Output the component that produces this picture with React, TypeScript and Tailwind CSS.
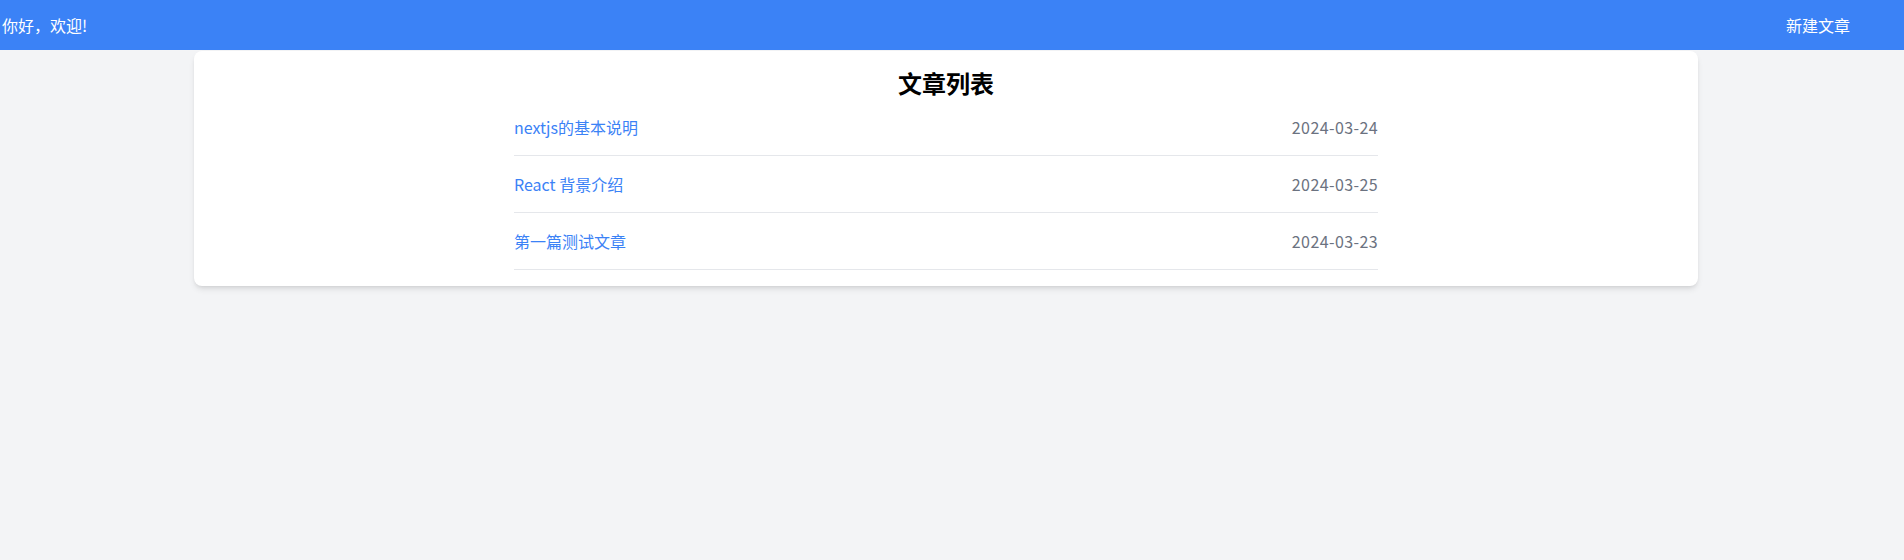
import React from "react";

const posts = [
  { id: 1, title: "nextjs的基本说明", date: "2024-03-24" },
  { id: 2, title: "React 背景介绍", date: "2024-03-25" },
  { id: 3, title: "第一篇测试文章", date: "2024-03-23" },
];

const font = "font-['Microsoft_YaHei','Noto_Sans_CJK_SC',sans-serif]";

const App: React.FC = () => {
  return (
    <div className={`min-h-[560px] bg-[#f3f4f6] ${font}`}>
      {/* 顶部导航 */}
      <header className="h-[50px] bg-[#3b82f6] text-white flex items-center justify-between pl-[2px] pr-[54px]">
        <span className="text-base">你好，欢迎!</span>
        <a href="#" className="text-base">
          新建文章
        </a>
      </header>

      <div className="w-[1892px]">
        <main className="w-[1504px] mx-auto mt-px bg-white rounded-lg shadow-md p-4">
          <h1 className="text-2xl font-bold text-center text-black">文章列表</h1>
          <ul className="max-w-4xl mx-auto px-4">
            {posts.map((post) => (
              <li
                key={post.id}
                className="flex items-center justify-between py-4 border-b border-[#e5e7eb]"
              >
                <a href="#" className="text-base text-[#3b82f6]">
                  {post.title}
                </a>
                <span className="text-base text-[#6b7280] tracking-[0.4px]">{post.date}</span>
              </li>
            ))}
          </ul>
        </main>
      </div>
    </div>
  );
};

export default App;
